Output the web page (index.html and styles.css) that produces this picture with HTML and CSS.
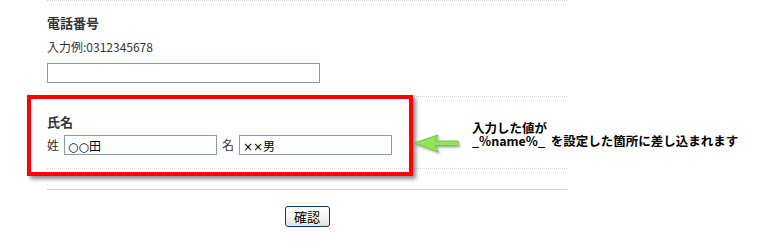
FILE: index.html
```html
<!DOCTYPE html>
<html lang="ja">
<head>
<meta charset="utf-8">
<link rel="stylesheet" href="styles.css">
</head>
<body>
<div class="page">
  <form class="form">
    <div class="field field-tel">
      <div class="label">電話番号</div>
      <div class="hint">入力例:0312345678</div>
      <input class="text tel" type="text">
    </div>
    <div class="field field-name">
      <div class="label">氏名</div>
      <div class="name-row">
        <span class="sub">姓</span>
        <input class="text short" type="text" value="○○田">
        <span class="sub">名</span>
        <input class="text short" type="text" value="××男">
      </div>
    </div>
    <div class="actions"><button type="button" class="btn">確認</button></div>
  </form>
  <div class="highlight"></div>
  <svg class="arrow" width="52" height="24" viewBox="0 0 52 24">
    <defs>
      <filter id="sh" x="-20%" y="-40%" width="150%" height="200%">
        <feDropShadow dx="1.5" dy="1.5" stdDeviation="1.2" flood-color="#000" flood-opacity="0.35"/>
      </filter>
    </defs>
    <path d="M3 11 L27 3 L24 9 L47 9 L47 13.5 L24 13.5 L27 20 Z" fill="#90e35c" stroke="#72c544" stroke-width="1" stroke-linejoin="round" filter="url(#sh)"/>
  </svg>
  <div class="note">
    <div class="note-line">入力した値が</div>
    <div class="note-line">_%name%_&nbsp; を設定した箇所に差し込まれます</div>
  </div>
</div>
</body>
</html>
```

FILE: styles.css
```css
html, body {
  margin: 0;
  padding: 0;
  background: #fff;
}
.page {
  position: relative;
  width: 774px;
  height: 252px;
  font-family: "Noto Sans CJK JP", "DejaVu Sans", sans-serif;
  color: #333;
}
.form {
  margin: 0 0 0 47px;
  width: 520px;
}
.field {
  border-top: 1px dotted #d4d4d4;
}
.field-tel {
  padding: 14px 0 13px;
}
.field-name {
  padding: 17px 0 13px;
  border-bottom: 1px dotted #d4d4d4;
}
.label {
  font-size: 13px;
  font-weight: bold;
  line-height: 16px;
}
.hint {
  margin-top: 8px;
  font-size: 12px;
  line-height: 16px;
}
.text {
  box-sizing: border-box;
  height: 20px;
  margin: 0;
  padding: 1px 3px;
  border: 1px solid #7f9db9;
  background: #fff;
  font-family: "DejaVu Sans", "Noto Sans CJK JP", sans-serif;
  font-size: 12px;
  color: #000;
  outline: none;
}
.tel {
  display: block;
  margin-top: 8px;
  width: 273px;
}
.name-row {
  display: flex;
  align-items: center;
  gap: 5px;
  margin-top: 5px;
  font-size: 12px;
  line-height: 20px;
}
.sub {
  width: 12px;
}
.short {
  width: 153px;
}
.actions {
  margin-top: 20px;
  border-top: 1px solid #cfcfcf;
  padding-top: 16px;
  display: flex;
  justify-content: center;
}
.btn {
  box-sizing: border-box;
  width: 45px;
  height: 21px;
  padding: 0;
  border: 1px solid #003c74;
  border-radius: 3px;
  background: linear-gradient(#ffffff, #f3f3ee 60%, #e3e2da);
  font-family: "Noto Sans CJK JP", sans-serif;
  font-size: 13px;
  line-height: 19px;
  color: #000;
}
.highlight {
  position: absolute;
  left: 27px;
  top: 95px;
  width: 386px;
  height: 81px;
  box-sizing: border-box;
  border: 4px solid #ff0000;
  box-shadow: 3px 3px 4px rgba(0, 0, 0, 0.45);
}
.arrow {
  position: absolute;
  left: 411px;
  top: 132px;
}
.note {
  position: absolute;
  left: 472px;
  top: 121px;
  font-size: 12.5px;
  font-weight: bold;
  color: #000;
  white-space: nowrap;
}
.note-line {
  height: 13px;
  line-height: 13px;
  overflow: visible;
}
```
